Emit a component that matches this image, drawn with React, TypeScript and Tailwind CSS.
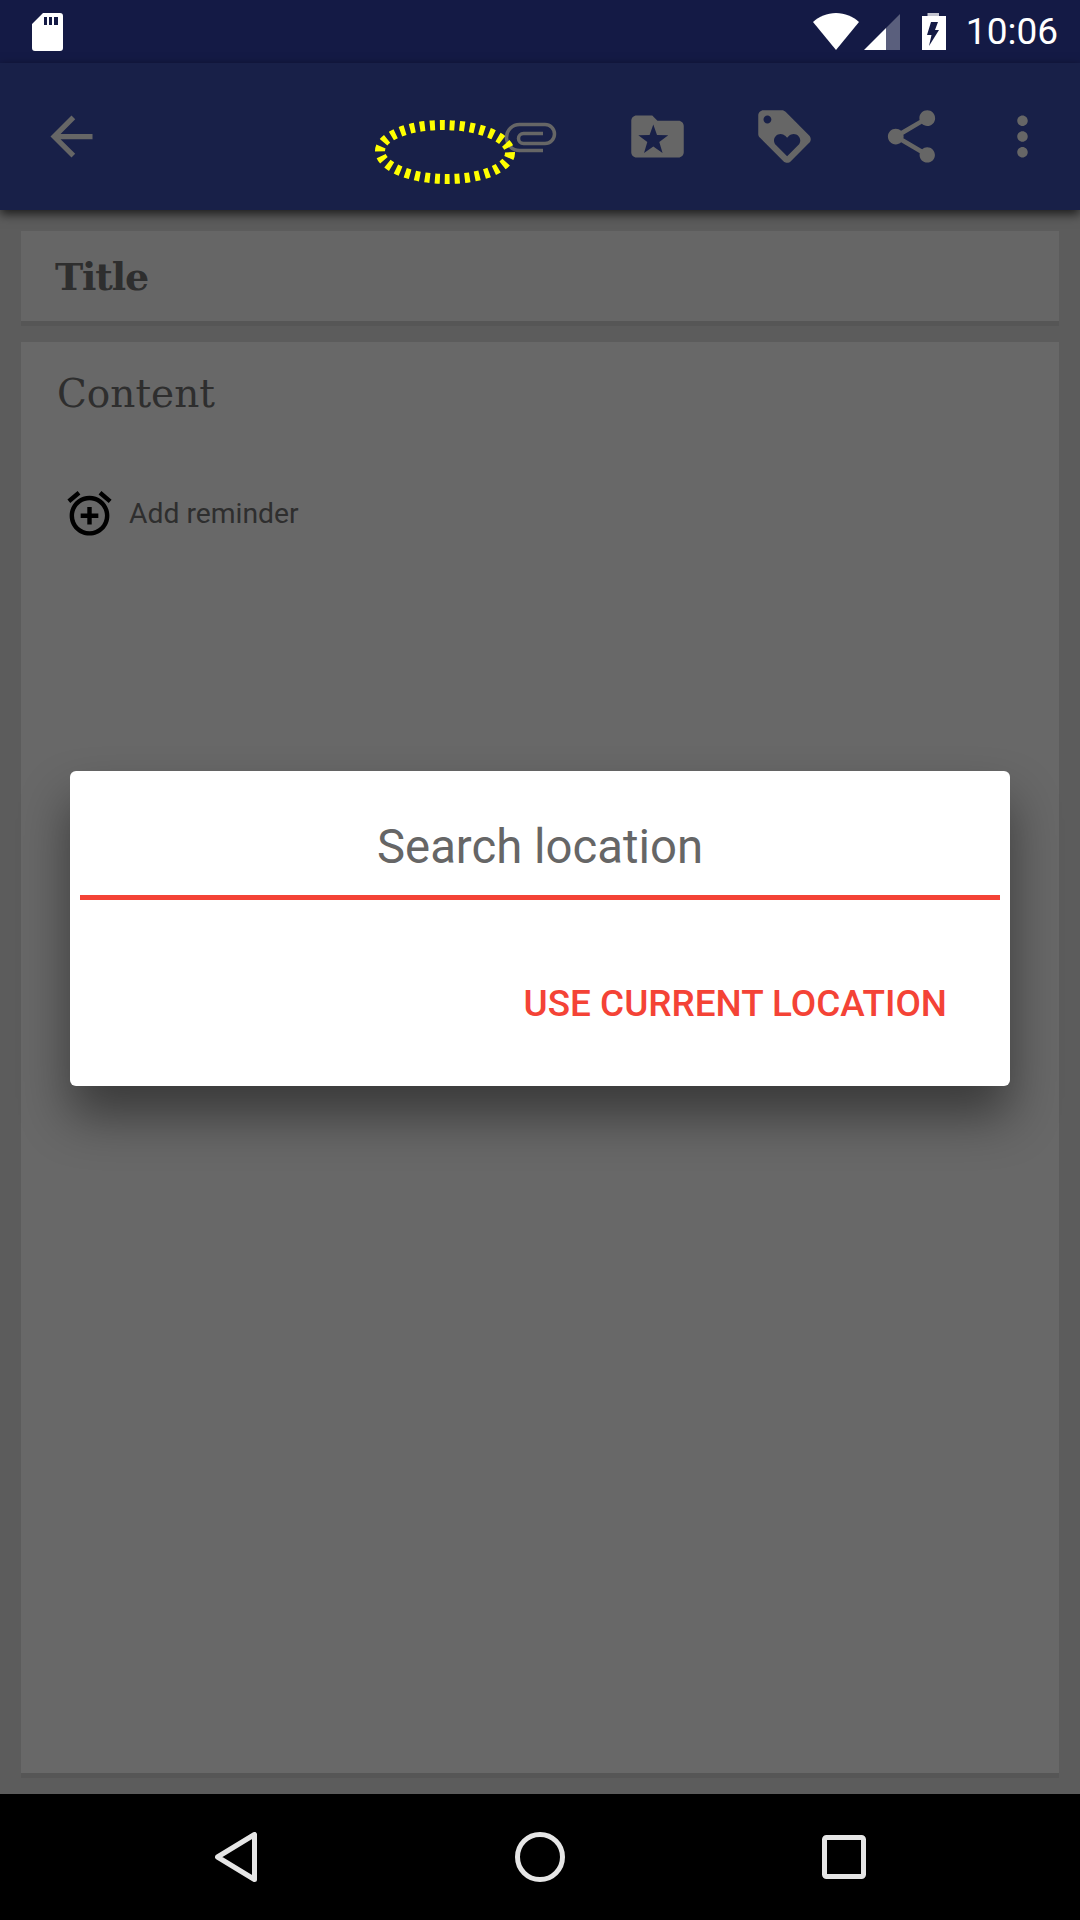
// App.tsx - note editor with location dialog on top
const ICON_GRAY = '#666666';

function Icon({ d, className = '' }: { d: string; className?: string }) {
  return (
    <svg viewBox="0 0 24 24" className={`w-[63px] h-[63px] shrink-0 ${className}`} fill={ICON_GRAY} fillRule="evenodd">
      <path d={d} />
    </svg>
  );
}

const backPath = 'M20 11H7.83l5.59-5.59L12 4l-8 8 8 8 1.41-1.41L7.83 13H20v-2z';
const folderPath =
  'M20 6h-8l-2-2H4c-1.1 0-1.99.9-1.99 2L2 18c0 1.1.9 2 2 2h16c1.1 0 2-.9 2-2V8c0-1.1-.9-2-2-2zM10.4 7.4L11.81 11.46 16.1 11.55 12.68 14.14 13.93 18.25 10.4 15.8 6.87 18.25 8.12 14.14 4.7 11.55 8.99 11.46z';
const tagPath =
  'M21.41 11.58l-9-9C12.05 2.22 11.55 2 11 2H4c-1.1 0-2 .9-2 2v7c0 .55.22 1.05.59 1.42l9 9c.36.36.86.58 1.41.58.55 0 1.05-.22 1.41-.59l7-7c.37-.36.59-.86.59-1.41 0-.55-.23-1.06-.59-1.42zM5.5 7C4.67 7 4 6.33 4 5.5S4.67 4 5.5 4 7 4.67 7 5.5 6.33 7 5.5 7zm11.77 8.27L13 19.54l-4.27-4.27C8.28 14.81 8 14.19 8 13.5c0-1.38 1.12-2.5 2.5-2.5.69 0 1.32.28 1.77.74l.73.72.73-.73c.45-.45 1.08-.73 1.77-.73 1.38 0 2.5 1.12 2.5 2.5 0 .69-.28 1.32-.73 1.77z';
const sharePath =
  'M18 16.08c-.76 0-1.44.3-1.96.77L8.91 12.7c.05-.23.09-.46.09-.7s-.04-.47-.09-.7l7.05-4.11c.54.5 1.25.81 2.04.81 1.66 0 3-1.34 3-3s-1.34-3-3-3-3 1.34-3 3c0 .24.04.47.09.7L8.04 9.81C7.5 9.31 6.79 9 6 9c-1.66 0-3 1.34-3 3s1.34 3 3 3c.79 0 1.5-.31 2.04-.81l7.12 4.16c-.05.21-.08.43-.08.65 0 1.61 1.31 2.92 2.92 2.92 1.61 0 2.92-1.31 2.92-2.92s-1.31-2.92-2.92-2.92z';
const morePath =
  'M12 8c1.1 0 2-.9 2-2s-.9-2-2-2-2 .9-2 2 .9 2 2 2zm0 2c-1.1 0-2 .9-2 2s.9 2 2 2 2-.9 2-2-.9-2-2-2zm0 6c-1.1 0-2 .9-2 2s.9 2 2 2 2-.9 2-2-.9-2-2-2z';
const alarmPath =
  'M7.88 3.39L6.6 1.86 2 5.71l1.29 1.53 4.59-3.85zM22 5.72l-4.6-3.86-1.29 1.53 4.6 3.86L22 5.72zM12 4c-4.97 0-9 4.03-9 9s4.02 9 9 9c4.97 0 9-4.03 9-9s-4.03-9-9-9zm0 16c-3.86 0-7-3.14-7-7s3.14-7 7-7 7 3.14 7 7-3.14 7-7 7zm1-11h-2v3H8v2h3v3h2v-3h3v-2h-3V9z';

function StatusBar() {
  return (
    <div className="h-[63px] shrink-0 bg-[#141a45] flex items-center pl-[32px] pr-[22px]">
      {/* sd card */}
      <svg viewBox="0 0 31 38" className="w-[31px] h-[38px]">
        <path
          fill="#fff"
          fillRule="evenodd"
          d="M11 0H28a3 3 0 0 1 3 3V35a3 3 0 0 1-3 3H3a3 3 0 0 1-3-3V11zM12 4v8h3V4zM17 4v8h3V4zM22 4v8h4V4z"
        />
      </svg>
      <div className="flex-1" />
      {/* wifi */}
      <svg viewBox="0 0 46 37" className="w-[46px] h-[37px]">
        <path fill="#fff" d="M23 37L0 9C6 3.500 14 0 23 0s17 3.500 23 9z" />
      </svg>
      {/* signal */}
      <svg viewBox="0 0 36 36" className="w-[36px] h-[36px] ml-[5px]">
        <path fill="#fff" fillOpacity="0.3" d="M36 0V36H22V14z" />
        <path fill="#fff" d="M22 14V36H0z" />
      </svg>
      {/* battery */}
      <svg viewBox="0 0 24 37" className="w-[24px] h-[37px] ml-[22px]">
        <path fill="#fff" fillOpacity="0.75" d="M5.500 0H17V3H5.500z" />
        <path fill="#fff" fillRule="evenodd" d="M0 3H24V37H0zM9 9H16L13 17H17L7 33 9.500 22H5z" />
      </svg>
      <span className="ml-[20px] font-['Roboto',sans-serif] text-[37px] leading-[63px] text-white">10:06</span>
    </div>
  );
}

function AppBar() {
  return (
    <div className="relative z-10 h-[147px] shrink-0 bg-[#182048] flex items-center pl-[40px] shadow-[0_4px_10px_rgba(0,0,0,0.7)]">
      <Icon d={backPath} />
      <div className="flex-1" />
      {/* thin paperclip, the material one is too heavy */}
      <svg viewBox="0 0 63 63" className="w-[63px] h-[63px] shrink-0" fill="none" stroke={ICON_GRAY} strokeWidth="3.500">
        <path d="M43 45.500H19.500a13 13 0 0 1 0-26H45a9.500 9.500 0 0 1 0 19H23.500a5 5 0 0 1 0-10H43" />
      </svg>
      <Icon d={folderPath} className="ml-[63px]" />
      <Icon d={tagPath} className="ml-[64px]" />
      <Icon d={sharePath} className="ml-[64px]" />
      <Icon d={morePath} className="ml-[48px] mr-[26px]" />
      {/* yellow dotted scribble */}
      <svg viewBox="0 0 140 66" className="absolute left-[375px] top-[57px] w-[140px] h-[66px] overflow-visible pointer-events-none">
        <ellipse
          cx="70"
          cy="32"
          rx="65"
          ry="27"
          fill="none"
          stroke="#ffff00"
          strokeWidth="10"
          strokeDasharray="5 5"
          transform="rotate(1 70 32)"
        />
      </svg>
    </div>
  );
}

function Editor() {
  return (
    <div className="flex-1 min-h-0 bg-[#5c5c5c] pt-[21px] px-[21px] pb-[16px] flex flex-col gap-[16px]">
      <div className="h-[95px] shrink-0 bg-[#666666] border-b-[5px] border-[#565656] pl-[34px] flex items-center">
        <span className="font-['DejaVu_Serif',serif] font-bold text-[38px] tracking-[-1.2px] text-[#2e2e2e]">Title</span>
      </div>
      <div className="flex-1 bg-[#686868] border-b-[5px] border-[#565656] pl-[36px] pt-[26px]">
        <div className="font-['DejaVu_Serif',serif] text-[39px] leading-[52px] text-[#2e2e2e]">Content</div>
        <div className="mt-[67px] ml-[6px] flex items-center">
          <svg viewBox="0 0 24 24" className="w-[53px] h-[53px]" fill="#000">
            <path d={alarmPath} />
          </svg>
          <span className="ml-[13px] pt-[2px] font-['Roboto',sans-serif] text-[28.300px] text-[#2e2e2e]">Add reminder</span>
        </div>
      </div>
    </div>
  );
}

function NavBar() {
  return (
    <div className="h-[126px] shrink-0 bg-black flex items-center pl-[215px]">
      <svg viewBox="0 0 42 50" className="w-[42px] h-[50px]">
        <path d="M39.500 2.500V47.500L2.500 25z" fill="none" stroke="#e6e6e6" strokeWidth="5" strokeLinejoin="round" />
      </svg>
      <svg viewBox="0 0 50 50" className="w-[50px] h-[50px] ml-[258px]">
        <circle cx="25" cy="25" r="22.500" fill="none" stroke="#e6e6e6" strokeWidth="5" />
      </svg>
      <svg viewBox="0 0 44 44" className="w-[44px] h-[44px] ml-[257px]">
        <rect x="2.500" y="2.500" width="39" height="39" rx="2" fill="none" stroke="#e6e6e6" strokeWidth="5" />
      </svg>
    </div>
  );
}

function LocationDialog() {
  return (
    <div className="absolute left-[70px] top-[771px] w-[940px] h-[315px] bg-white rounded-[6px] shadow-[0_30px_50px_rgba(0,0,0,0.45)] px-[10px] flex flex-col">
      <div className="h-[129px] shrink-0 border-b-[5px] border-[#f44336] flex items-center justify-center pt-[29px] font-['Roboto',sans-serif] text-[47.300px] text-[#666666]">
        Search location
      </div>
      <div className="flex-1 flex justify-end pt-[84px] pr-[53px]">
        <span className="font-['Roboto',sans-serif] font-medium text-[36.900px] leading-[40px] text-[#f44336]">USE CURRENT LOCATION</span>
      </div>
    </div>
  );
}

export default function App() {
  return (
    <div className="relative w-[1080px] h-[1920px] overflow-hidden flex flex-col">
      <StatusBar />
      <AppBar />
      <Editor />
      <NavBar />
      <LocationDialog />
    </div>
  );
}
